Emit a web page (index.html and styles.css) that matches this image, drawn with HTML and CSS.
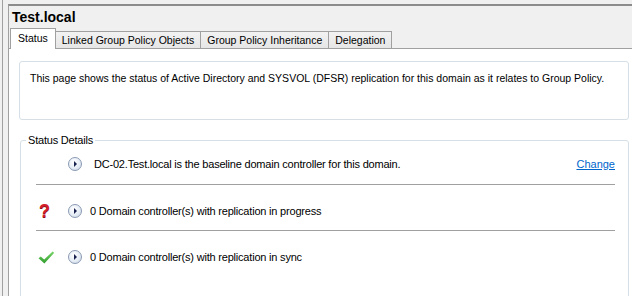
FILE: index.html
```html
<!DOCTYPE html>
<html>
<head>
<meta charset="utf-8">
<link rel="stylesheet" href="styles.css">
</head>
<body>
<div class="app">
  <div class="rail"></div>
  <div class="pane">
    <div class="title">Test.local</div>
    <div class="tabs">
      <div class="tab active">Status</div>
      <div class="tab">Linked Group Policy Objects</div>
      <div class="tab">Group Policy Inheritance</div>
      <div class="tab">Delegation</div>
    </div>
    <div class="content">
      <div class="intro">This page shows the status of Active Directory and SYSVOL (DFSR) replication for this domain as it relates to Group Policy.</div>
      <fieldset class="group">
        <legend>Status Details</legend>
        <div class="row first">
          <span class="status"></span>
          <span class="expander"></span>
          <span class="label wide">DC-02.Test.local is the baseline domain controller for this domain.</span>
          <a class="link" href="#">Change</a>
        </div>
        <div class="row">
          <span class="status"><span class="question">?</span></span>
          <span class="expander"></span>
          <span class="label">0 Domain controller(s) with replication in progress</span>
        </div>
        <div class="row last">
          <span class="status">
            <svg class="check" width="17" height="13" viewBox="0 0 17 13">
              <defs>
                <linearGradient id="cg" x1="0" y1="0" x2="0" y2="1">
                  <stop offset="0" stop-color="#7ad66a"/>
                  <stop offset="1" stop-color="#2e9c2c"/>
                </linearGradient>
              </defs>
              <path d="M0.5 7.2 L2.8 5.4 L6.2 8.6 L14.6 0.4 L16.2 1.8 L6.4 12.6 Z" fill="url(#cg)"/>
            </svg>
          </span>
          <span class="expander"></span>
          <span class="label">0 Domain controller(s) with replication in sync</span>
        </div>
      </fieldset>
    </div>
  </div>
</div>
</body>
</html>
```
FILE: styles.css
```css
html, body {
  margin: 0;
  padding: 0;
}
body {
  width: 632px;
  height: 296px;
  overflow: hidden;
  background: #f0f0f0;
  font-family: "Liberation Sans", Arial, sans-serif;
  color: #000;
}
.app {
  display: flex;
  height: 296px;
}
.rail {
  width: 5px;
  margin-left: 2px;
  border-left: 1px solid #a0a0a0;
}
.pane {
  flex: 1;
  display: flex;
  flex-direction: column;
  margin-top: 4px;
  border-top: 2px solid #8c8c8c;
  border-left: 1px solid #a0a0a0;
  min-width: 0;
  overflow: hidden;
}
.title {
  height: 22px;
  line-height: 22px;
  padding-left: 3px;
  font-size: 14px;
  font-weight: bold;
}
.tabs {
  display: flex;
  align-items: flex-end;
  height: 20px;
  padding-left: 1px;
  position: relative;
  z-index: 1;
}
.tab {
  box-sizing: border-box;
  height: 17px;
  line-height: 16px;
  padding: 0 6px;
  margin-right: -1px;
  font-size: 10.5px;
  border: 1px solid #a0a0a0;
  border-bottom: none;
  background: linear-gradient(#f2f2f2, #e6e6e6);
  white-space: nowrap;
}
.tab.active {
  height: 21px;
  margin-bottom: -1px;
  line-height: 18px;
  padding: 0 7px;
  background: #fff;
  position: relative;
  z-index: 2;
}
.content {
  flex: 1;
  min-height: 0;
  overflow: hidden;
  background: #fff;
  border-top: 1px solid #a0a0a0;
  padding: 12px 3px 0 10px;
}
.intro {
  box-sizing: border-box;
  height: 59px;
  padding: 9px 10px 0 10px;
  border: 1px solid #d5dfe5;
  border-radius: 3px;
  font-size: 10.5px;
  line-height: 14px;
  white-space: nowrap;
}
.group {
  margin: 13px 0 0 1px;
  padding: 0 13px 0 15px;
  border: 1px solid #d5dfe5;
  border-radius: 3px;
  height: 168px;
}
.group legend {
  margin-left: -10px;
  padding: 0 2px;
  font-size: 11px;
  letter-spacing: -0.2px;
  line-height: 14px;
}
.row {
  display: flex;
  align-items: center;
  box-sizing: border-box;
  height: 46px;
  padding-top: 6px;
  border-bottom: 1px solid #a0a0a0;
  font-size: 11px;
  letter-spacing: -0.2px;
}
.row.first {
  height: 38px;
  padding-top: 0;
  padding-bottom: 4px;
}
.row.last {
  border-bottom: none;
}
.status {
  width: 32px;
  display: flex;
  align-items: center;
  padding-left: 2px;
  box-sizing: border-box;
}
.question {
  color: #d2202b;
  font-weight: bold;
  font-size: 18px;
  line-height: 16px;
  padding-left: 1px;
  text-shadow: 0 1px 0 #8e1016;
}
.check {
  display: block;
}
.expander {
  position: relative;
  width: 12px;
  height: 12px;
  flex: none;
  border: 1px solid #8a9ab3;
  border-radius: 50%;
  background: radial-gradient(circle at 40% 35%, #ffffff 0%, #e6edf5 55%, #c5d1e1 100%);
}
.expander::after {
  content: "";
  position: absolute;
  left: 5px;
  top: 3px;
  border-left: 3px solid #1a2350;
  border-top: 3px solid transparent;
  border-bottom: 3px solid transparent;
}
.label {
  margin-left: 8px;
  white-space: nowrap;
}
.label.wide {
  margin-left: 12px;
}
.link {
  margin-left: auto;
  color: #0066cc;
  text-decoration: underline;
  letter-spacing: 0;
}
```
